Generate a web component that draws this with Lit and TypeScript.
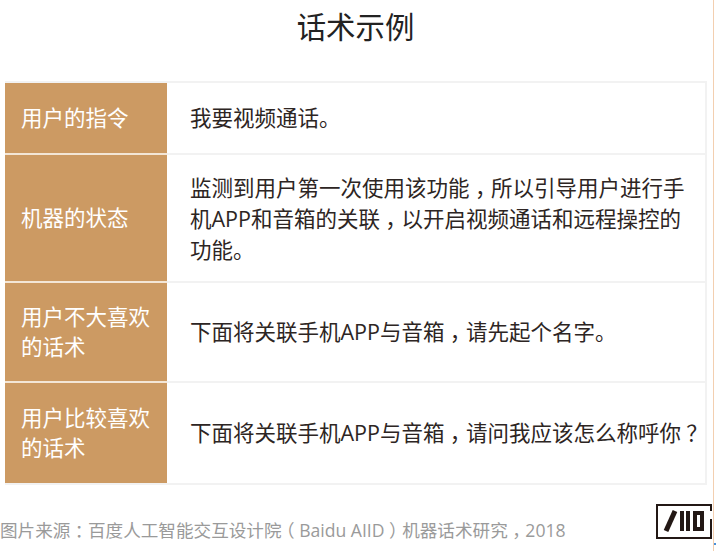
import { LitElement, html, css } from "lit";
import { customElement } from "lit/decorators.js";

const rows = [
  { k: "用户的指令", v: "我要视频通话。", c: "r1" },
  { k: "机器的状态", v: "监测到用户第一次使用该功能，所以引导用户进行手\n机APP和音箱的关联，以开启视频通话和远程操控的\n功能。", c: "r2" },
  { k: "用户不大喜欢\n的话术", v: "下面将关联手机APP与音箱，请先起个名字。", c: "r3" },
  { k: "用户比较喜欢\n的话术", v: "下面将关联手机APP与音箱，请问我应该怎么称呼你？", c: "r4" },
];

const punct = (s: string) =>
  s.split(/([，：？（）])/).map((part) => (/^[，：？（）]$/.test(part) ? html`<span class="p">${part}</span>` : part));

@customElement("app-root")
export class AppRoot extends LitElement {
  static styles = css`
    :host { display: block; position: relative; width: 716px; height: 551px; overflow: hidden; background: #fff; font-family: "Open Sans", "Noto Sans CJK SC", sans-serif; }
    .p { display: inline-block; width: 1em; text-align: center; font-feature-settings: "halt"; }
    .page { width: 713px; height: 551px; border-right: 1px solid #f3cfb0; display: flex; flex-direction: column; }
    h1 { margin: 0; height: 81px; padding: 8px 2px 0 0; box-sizing: border-box; text-align: center; font-size: 29.4px; line-height: 38px; font-weight: 400; color: #222; }
    .table { margin-left: 5px; width: 702px; border: 2px solid #f2f2f2; border-left: 0; box-sizing: border-box; }
    .row { display: flex; border-top: 2px solid #f2f2f2; }
    .row:first-child { border-top: 0; }
    .r1 { height: 70px; } .r2 { height: 126px; } .r3 { height: 98px; } .r4 { height: 100px; }
    .k { width: 162px; flex: none; background: #cc9a63; color: #fff; font-size: 21.5px; line-height: 30px; padding: 0 0 0 16px; box-sizing: border-box; display: flex; align-items: center; box-shadow: 0 -2px 0 #f3e6d6; white-space: pre-line; }
    .row:first-child .k { box-shadow: none; }
    .v { flex: 1; font-size: 21.5px; line-height: 31px; color: #2d2523; padding: 0 0 2px 23px; display: flex; align-items: center; white-space: pre-line; }
    .r2 .v { padding-bottom: 0; }
    .foot { flex: 1; display: flex; align-items: flex-start; justify-content: space-between; }
    .src { color: #9a9a9a; font-size: 17.6px; line-height: 24px; margin-top: 33px; white-space: pre; }
    svg { margin: 19px 1px 0 0; display: block; }
    .speck { position: absolute; left: 714px; top: 543px; width: 2px; height: 2px; background: #4a90d9; }
  `;
  render() {
    return html`<div class="page">
      <h1>话术示例</h1>
      <div class="table">
        ${rows.map((r) => html`<div class="row ${r.c}"><div class="k">${r.k}</div><div class="v"><span>${punct(r.v)}</span></div></div>`)}
      </div>
      <div class="foot">
        <div class="src">${punct("图片来源：百度人工智能交互设计院（Baidu AIID）机器话术研究，2018")}</div>
        <svg width="56" height="35" viewBox="0 0 56 35">
          <path d="M55 7V1H1V34H55V15" fill="none" stroke="#231815" stroke-width="2"/>
          <path d="M10 27L19 7" stroke="#231815" stroke-width="5" fill="none"/>
          <rect x="24" y="7" width="4" height="20" fill="#231815"/>
          <rect x="30" y="7" width="4" height="20" fill="#231815"/>
          <path d="M39 9H46V25H39Z" fill="none" stroke="#231815" stroke-width="4"/>
        </svg>
      </div>
    </div>
    <div class="speck"></div>`;
  }
}
